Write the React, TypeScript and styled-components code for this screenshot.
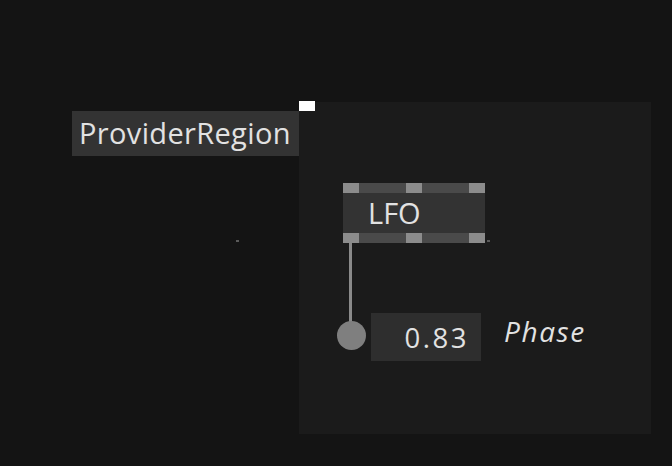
import React from "react"
import styled, { createGlobalStyle } from "styled-components"

const GlobalStyle = createGlobalStyle`
    html, body {
        margin: 0;
        padding: 0;
        background: #141414;
        overflow: hidden;
    }
    body {
        font-family: "Open Sans", "Noto Sans", sans-serif;
    }
`

interface Pos {
    x: number;
    y: number;
}

interface Size {
    w: number;
    h: number;
}

export default function App() {
    return (
        <>
            <GlobalStyle />
            <Canvas>
                {/* the region with its label on the left */}
                <Region x={299} y={102} w={352} h={332} />
                <RegionHandle x={299} y={101} />
                <RegionLabel x={72} y={111}>ProviderRegion</RegionLabel>

                <Speck x={236} y={240} />

                {/* LFO node */}
                <Node x={343} y={183} w={142}>
                    <PinBar>
                        <Pin />
                        <Pin />
                        <Pin />
                    </PinBar>
                    <NodeName>LFO</NodeName>
                    <PinBar>
                        <Pin />
                        <Pin />
                        <Pin />
                    </PinBar>
                </Node>
                <Speck x={487} y={240} />

                {/* link down to the iobox */}
                <Link x={349} y={243} w={3} h={80} />
                <Knob x={337} y={321} />

                <IOBox x={371} y={313} w={110} h={48}>0.83</IOBox>
                <PinLabel x={504} y={311}>Phase</PinLabel>
            </Canvas>
        </>
    )
}

const Canvas = styled.div`
    position: relative;
    width: 672px;
    height: 466px;
    background: #141414;
    overflow: hidden;
`

const Placed = styled.div<Pos>`
    position: absolute;
    left: ${props => props.x}px;
    top: ${props => props.y}px;
`

const Region = styled(Placed)<Size>`
    width: ${props => props.w}px;
    height: ${props => props.h}px;
    background: #1b1b1b;
`

const RegionHandle = styled(Placed)`
    width: 16px;
    height: 10px;
    background: #ffffff;
`

const RegionLabel = styled(Placed)`
    width: 227px;
    height: 45px;
    box-sizing: border-box;
    padding-left: 7px;
    background: #333333;
    color: #e2e2e2;
    font-size: 29px;
    line-height: 43px;
    letter-spacing: 0.35px;
    white-space: nowrap;
`

const Speck = styled(Placed)`
    width: 3px;
    height: 2px;
    background: #5a5a5a;
`

const Node = styled(Placed)<{ w: number }>`
    width: ${props => props.w}px;
    display: flex;
    flex-direction: column;
    background: #333333;
`

const PinBar = styled.div`
    height: 10px;
    display: flex;
    justify-content: space-between;
    background: #4a4a4a;
`

const Pin = styled.div`
    width: 16px;
    height: 10px;
    background: #8c8c8c;
`

const NodeName = styled.div`
    height: 40px;
    padding-left: 25px;
    color: #e2e2e2;
    font-size: 29px;
    line-height: 39px;
`

const Link = styled(Placed)<Size>`
    width: ${props => props.w}px;
    height: ${props => props.h}px;
    background: #8a8a8a;
`

const Knob = styled(Placed)`
    width: 29px;
    height: 29px;
    border-radius: 50%;
    background: #7f7f7f;
`

const IOBox = styled(Placed)<Size>`
    width: ${props => props.w}px;
    height: ${props => props.h}px;
    box-sizing: border-box;
    padding-right: 12px;
    background: #2e2e2e;
    color: #e2e2e2;
    font-size: 27.5px;
    line-height: 50px;
    text-align: right;
    letter-spacing: 2.5px;
`

const PinLabel = styled(Placed)`
    color: #e2e2e2;
    font-size: 28px;
    font-style: italic;
    line-height: 40px;
    letter-spacing: 1.6px;
`
